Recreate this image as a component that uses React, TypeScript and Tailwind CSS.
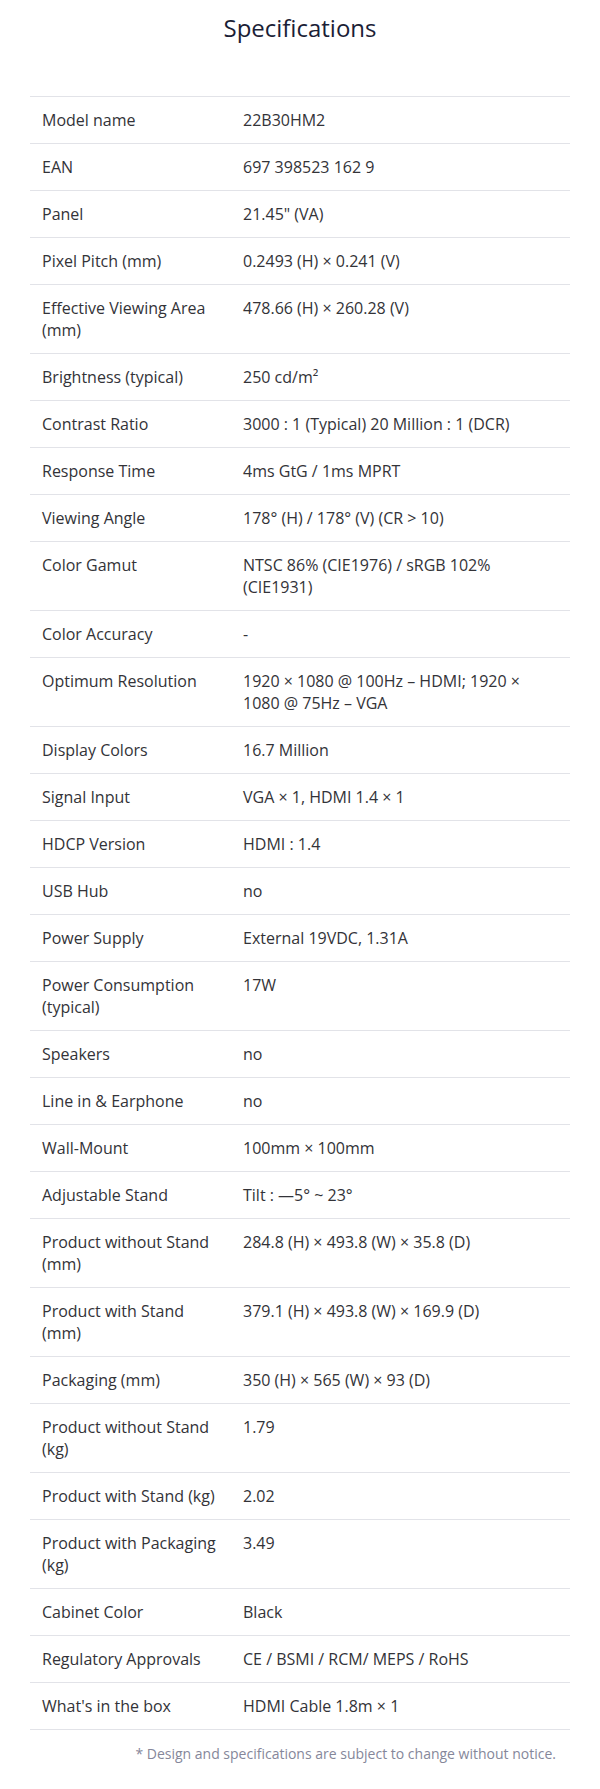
const specs: [string, string][] = [
  ["Model name", "22B30HM2"],
  ["EAN", "697 398523 162 9"],
  ["Panel", "21.45\" (VA)"],
  ["Pixel Pitch (mm)", "0.2493 (H) × 0.241 (V)"],
  ["Effective Viewing Area (mm)", "478.66 (H) × 260.28 (V)"],
  ["Brightness (typical)", "250 cd/m²"],
  ["Contrast Ratio", "3000 : 1 (Typical) 20 Million : 1 (DCR)"],
  ["Response Time", "4ms GtG / 1ms MPRT"],
  ["Viewing Angle", "178° (H) / 178° (V) (CR > 10)"],
  ["Color Gamut", "NTSC 86% (CIE1976) / sRGB 102% (CIE1931)"],
  ["Color Accuracy", "-"],
  ["Optimum Resolution", "1920 × 1080 @ 100Hz – HDMI; 1920 × 1080 @ 75Hz – VGA"],
  ["Display Colors", "16.7 Million"],
  ["Signal Input", "VGA × 1, HDMI 1.4 × 1"],
  ["HDCP Version", "HDMI : 1.4"],
  ["USB Hub", "no"],
  ["Power Supply", "External 19VDC, 1.31A"],
  ["Power Consumption (typical)", "17W"],
  ["Speakers", "no"],
  ["Line in & Earphone", "no"],
  ["Wall-Mount", "100mm × 100mm"],
  ["Adjustable Stand", "Tilt : —5° ~ 23°"],
  ["Product without Stand (mm)", "284.8 (H) × 493.8 (W) × 35.8 (D)"],
  ["Product with Stand (mm)", "379.1 (H) × 493.8 (W) × 169.9 (D)"],
  ["Packaging (mm)", "350 (H) × 565 (W) × 93 (D)"],
  ["Product without Stand (kg)", "1.79"],
  ["Product with Stand (kg)", "2.02"],
  ["Product with Packaging (kg)", "3.49"],
  ["Cabinet Color", "Black"],
  ["Regulatory Approvals", "CE / BSMI / RCM/ MEPS / RoHS"],
  ["What's in the box", "HDMI Cable 1.8m × 1"],
];

export default function App() {
  return (
    <main className="min-h-screen bg-white px-[30px] pb-7 pt-3 font-['Open_Sans',sans-serif] text-[#333338]">
      <h2 className="text-center text-2xl font-medium leading-8 text-[#1b1e36]">Specifications</h2>

      <div className="mt-[52px] border-t border-[#e2e3e8]">
        {specs.map(([label, value]) => (
          <div key={label} className="grid grid-cols-[201px_1fr] border-b border-[#e2e3e8] text-base leading-[22px]">
            <div className="px-3 py-3">{label}</div>
            <div className="px-3 py-3">{value}</div>
          </div>
        ))}
      </div>

      <p className="mr-[14px] mt-[14px] text-right text-sm leading-5 text-[#85879a]">
        * Design and specifications are subject to change without notice.
      </p>
    </main>
  );
}
